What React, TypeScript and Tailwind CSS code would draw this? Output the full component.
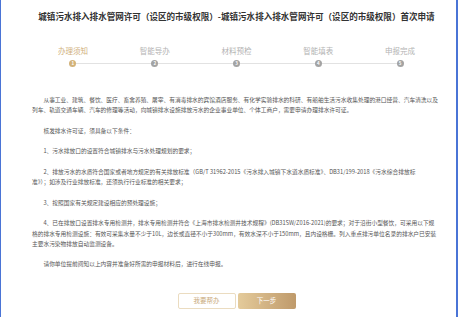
const steps = ["办理须知", "智能导办", "材料预检", "智能填表", "申报完成"];

// each paragraph is split into its lines as they wrap in the page
const paras: string[][] = [
  [
    "从事工业、建筑、餐饮、医疗、畜禽养殖、屠宰、有消毒排水的宾馆酒店服务、有化学实验排水的科研、有船舶生活污水收集处理的港口经营、汽车清洗以及",
    "列车、轨道交通车辆、汽车的修理等活动，向城镇排水设施排放污水的企业事业单位、个体工商户，需要申请办理排水许可证。",
  ],
  ["核发排水许可证，须具备以下条件："],
  ["1、污水排放口的设置符合城镇排水与污水处理规划的要求；"],
  [
    "2、排放污水的水质符合国家或者地方规定的有关排放标准（GB/T 31962-2015《污水排入城镇下水道水质标准》、DB31/199-2018《污水综合排放标",
    "准》）；如涉及行业排放标准，还须执行行业标准的相关要求；",
  ],
  ["3、按照国家有关规定建设相应的预处理设施；"],
  [
    "4、已在排放口设置排水专用检测井，排水专用检测井符合《上海市排水检测井技术规程》(DB31SW/Z016-2021)的要求；对于沿街小型餐饮，可采用以下规",
    "格的排水专用检测设施：有效可采集水量不少于10L，边长或直径不小于300mm，有效水深不小于150mm，且内设格栅。列入重点排污单位名录的排水户已安装",
    "主要水污染物排放自动监测设备。",
  ],
  ["请你单位提前阅知以上内容并准备好所需的申报材料后，进行在线申报。"],
];

const font = { fontFamily: '"Noto Sans CJK SC", "Noto Sans", sans-serif' };

export default function App() {
  return (
    <div
      className="w-[458px] h-[317px] overflow-hidden bg-white border-l border-l-[#4a74d6] border-r-2 border-r-[#4a74d6]"
      style={font}
    >
      <div className="ml-[31px] w-[409px]">
        <h1 className="pt-[10px] text-center text-[8.55px] leading-[12px] font-bold text-[#333] whitespace-nowrap">
          城镇污水排入排水管网许可（设区的市级权限）-城镇污水排入排水管网许可（设区的市级权限）首次申请
        </h1>

        <div className="mt-[24px] grid grid-cols-5">
          {steps.map((s, i) => (
            <div key={s} className="flex flex-col items-center">
              <div
                className={
                  "text-[7.5px] leading-[10px] " +
                  (i === 0 ? "text-[#d0b07c]" : "text-[#b3b3b3]")
                }
              >
                {s}
              </div>
              <div className="mt-[4px] flex w-full items-center">
                <div className={"h-px flex-1 " + (i === 0 ? "" : "bg-[#e2e2e2]")} />
                <div
                  className={
                    "flex h-[7px] w-[7px] items-center justify-center rounded-full text-[4.5px] font-bold leading-none text-white " +
                    (i === 0 ? "bg-[#d2b27a]" : "bg-[#a3a3a3]")
                  }
                >
                  {i + 1}
                </div>
                <div className={"h-px flex-1 " + (i === 4 ? "" : "bg-[#e2e2e2]")} />
              </div>
            </div>
          ))}
        </div>

        <div className="mt-[28px] flex flex-col gap-[10.4px] text-[5.72px] leading-[10.2px] text-[#555]">
          {paras.map((lines, i) => (
            <p key={i} className="indent-[2em] whitespace-nowrap">
              {lines.map((l, j) => (
                <span key={j}>
                  {j > 0 && <br />}
                  {l}
                </span>
              ))}
            </p>
          ))}
        </div>

        <div className="mt-[23px] flex justify-center gap-[2px]">
          <button className="h-[16px] w-[58px] rounded-[2px] border border-[#ebdcc0] bg-white text-[6.5px] text-[#c9ab7c]">
            我要帮办
          </button>
          <button className="h-[16px] w-[58px] rounded-[2px] bg-gradient-to-r from-[#e4cb9b] to-[#bf9a6b] text-[6.5px] text-white">
            下一步
          </button>
        </div>
      </div>
    </div>
  );
}
